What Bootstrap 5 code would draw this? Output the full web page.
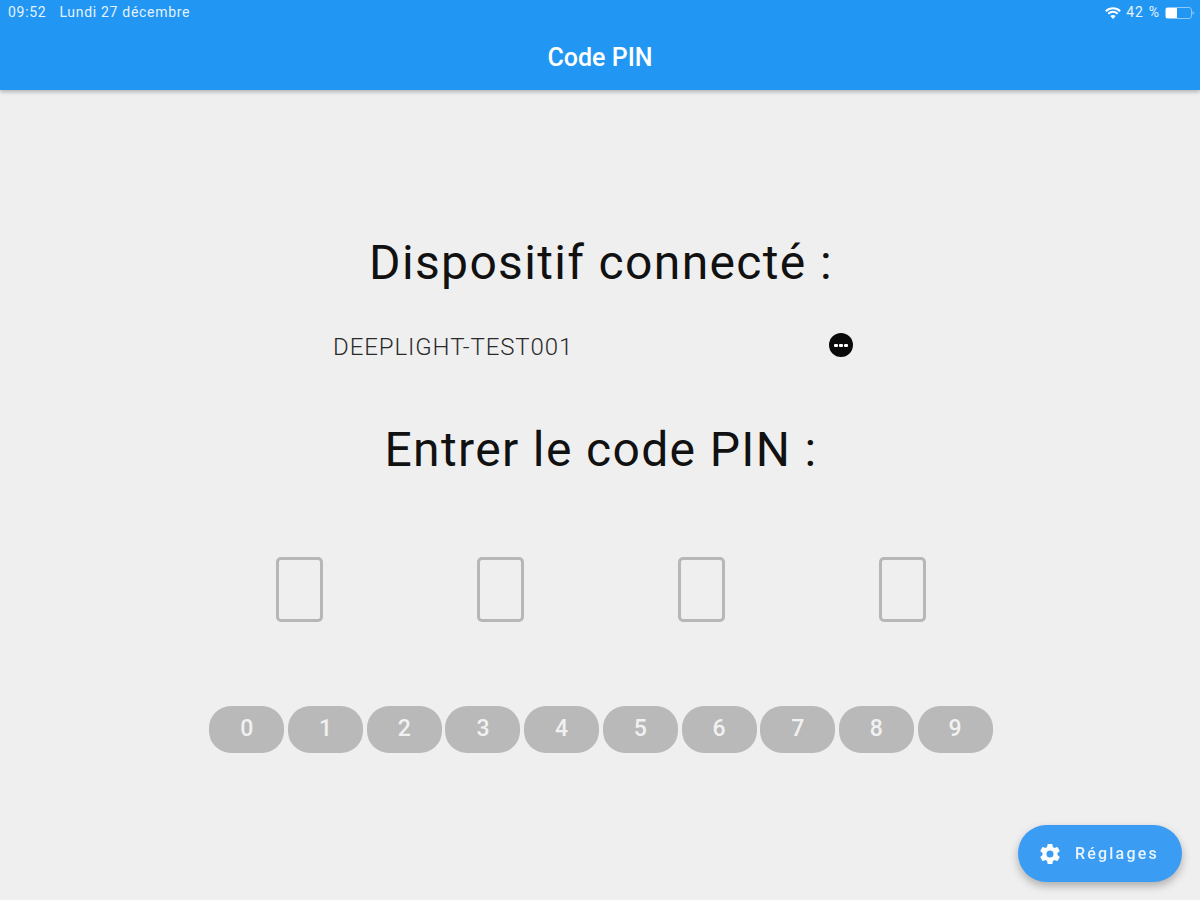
<!DOCTYPE html>
<html lang="fr">
<head>
<meta charset="utf-8">
<title>Code PIN</title>
<link href="https://cdn.jsdelivr.net/npm/bootstrap@5.3.0/dist/css/bootstrap.min.css" rel="stylesheet">
<style>
html,body{height:900px;overflow:hidden}
body{background:#efefef;font-family:Roboto,"Liberation Sans",sans-serif;color:#111}
.app-head{height:90px;background:#2196f3;color:#fff;box-shadow:0 2px 4px rgba(0,0,0,.25)}
.status-row{height:25px;padding:0 5px 0 8px;font-size:14px;letter-spacing:.7px;color:#e4f2fe}
.status-date{margin-left:13px}
.status-gap{gap:5px}
.status-pct{letter-spacing:1.1px}
.head-title{font-size:25px;font-weight:500;height:40px;margin-top:13px}
.page-body{height:810px;padding:147px 0 0 2px}
.big-title{font-size:48px;font-weight:400;line-height:52px;letter-spacing:1.35px;margin:0}
.dev-row{width:520px;margin:39px 16px 0 0;height:36px}
.dev-name{font-size:24px;line-height:36px;letter-spacing:.9px;color:#2a2a2a;font-weight:300;margin-top:1px}
.dev-dots{width:24px;height:24px;border-radius:50%;background:#0a0a0a;gap:1px;margin-top:5px}
.dev-dots i{display:block;width:4px;height:3px;background:#fff;border-radius:1px}
.title-two{margin-top:60px}
.pin-row{gap:154px;margin-top:81px}
.pin-box{width:47px;height:65px;border:3px solid #b7b7b7;border-radius:5px}
.key-row{gap:3.700px;margin-top:84px}
.key-pill{width:75px;height:47px;border-radius:22px;background:#b9b9b9;color:#f1f1f1;font-size:23px;font-weight:500;border:0;padding:0}
.fab-set{position:fixed;right:18px;bottom:18px;width:164px;height:57px;border-radius:29px;background:#3a9df3;color:#e8f4fe;font-size:16px;font-weight:500;letter-spacing:2.2px;box-shadow:0 4px 8px rgba(0,0,0,.28);gap:13px;border:0;padding:0 0 0 20px}
</style>
</head>
<body>
<header class="app-head">
  <div class="status-row d-flex align-items-center justify-content-between">
    <div><span>09:52</span><span class="status-date">Lundi 27 décembre</span></div>
    <div class="d-flex align-items-center status-gap">
      <svg width="16" height="12" viewBox="0 0 16 12"><g fill="none" stroke="#fff" stroke-width="2"><path d="M.8 4.200C4.800.4 11.200.4 15.200 4.200"/><path d="M3.300 6.700C6 4.200 10 4.200 12.700 6.700"/></g><path d="M5.300 9 8 12l2.700-3C9.100 7.600 6.900 7.600 5.300 9Z" fill="#fff"/></svg>
      <span class="status-pct">42 %</span>
      <svg width="30" height="14" viewBox="0 0 30 14"><rect x=".5" y="1.500" width="26" height="11" rx="2.500" fill="none" stroke="#8cc8f8"/><rect x="1" y="2" width="11" height="10" fill="#fff"/><path d="M27.500 5v4l2-2z" fill="#8cc8f8"/></svg>
    </div>
  </div>
  <div class="head-title d-flex align-items-center justify-content-center">Code PIN</div>
</header>
<main class="page-body d-flex flex-column align-items-center">
  <h1 class="big-title">Dispositif connecté :</h1>
  <div class="dev-row d-flex align-items-start justify-content-between">
    <span class="dev-name">DEEPLIGHT-TEST001</span>
    <span class="dev-dots d-flex align-items-center justify-content-center"><i></i><i></i><i></i></span>
  </div>
  <h2 class="big-title title-two">Entrer le code PIN :</h2>
  <div class="pin-row d-flex">
    <div class="pin-box"></div><div class="pin-box"></div><div class="pin-box"></div><div class="pin-box"></div>
  </div>
  <div class="key-row d-flex">
    <button class="key-pill">0</button><button class="key-pill">1</button><button class="key-pill">2</button><button class="key-pill">3</button><button class="key-pill">4</button><button class="key-pill">5</button><button class="key-pill">6</button><button class="key-pill">7</button><button class="key-pill">8</button><button class="key-pill">9</button>
  </div>
</main>
<button class="fab-set d-flex align-items-center">
  <svg width="24" height="24" viewBox="0 0 24 24"><path fill="#fff" d="M19.400 13c.04-.32.07-.66.07-1s-.03-.68-.07-1l2.100-1.650a.5.5 0 0 0 .12-.64l-2-3.460a.5.5 0 0 0-.61-.22l-2.490 1a7.300 7.300 0 0 0-1.690-.98l-.38-2.650A.49.49 0 0 0 14 2h-4a.49.49 0 0 0-.49.420l-.38 2.650c-.61.25-1.170.59-1.690.98l-2.490-1a.5.5 0 0 0-.61.22l-2 3.460a.49.49 0 0 0 .12.64L4.570 11c-.04.32-.07.66-.07 1s.03.68.07 1l-2.110 1.650a.5.5 0 0 0-.12.64l2 3.460c.12.22.39.3.61.22l2.490-1c.52.4 1.080.73 1.690.98l.38 2.650c.03.24.24.42.49.42h4c.25 0 .46-.18.49-.42l.38-2.650c.61-.25 1.170-.59 1.690-.98l2.490 1c.23.09.49 0 .61-.22l2-3.460a.5.5 0 0 0-.12-.64ZM12 15.500a3.500 3.500 0 1 1 0-7 3.500 3.500 0 0 1 0 7Z"/></svg>
  <span>Réglages</span>
</button>
<script src="https://cdn.jsdelivr.net/npm/bootstrap@5.3.0/dist/js/bootstrap.bundle.min.js"></script>
</body>
</html>
